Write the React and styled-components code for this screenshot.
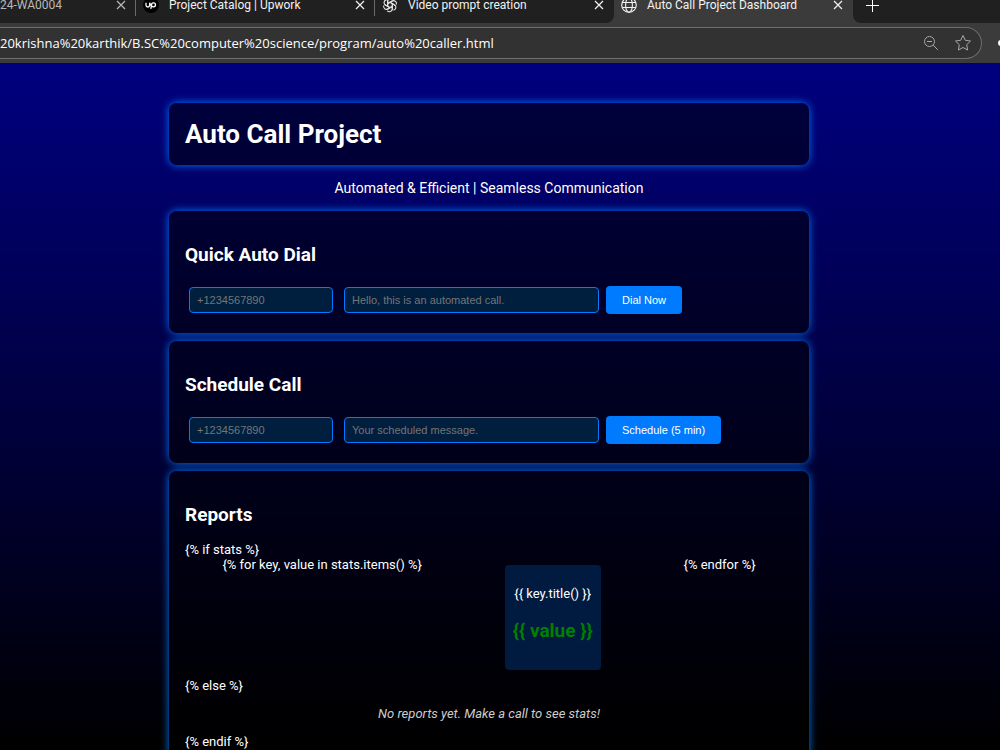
import styled, { createGlobalStyle } from "styled-components";

const GlobalStyle = createGlobalStyle`
  * {
    box-sizing: border-box;
  }
  body {
    margin: 0;
    background: #000;
  }
`;

const Browser = styled.div`
  display: flex;
  flex-direction: column;
  height: 100vh;
  font-family: "Open Sans", "Noto Sans", sans-serif;
  color: #fff;
`;

const TabStrip = styled.div`
  display: flex;
  flex: none;
  height: 23px;
  overflow: hidden;
  background: #202020;
`;

const Tab = styled.div`
  display: flex;
  align-items: center;
  flex: none;
  gap: 10px;
  width: ${(props) => (props.$cut ? "136px" : "239px")};
  height: 23px;
  padding: 0 9px 13px ${(props) => (props.$cut ? "0" : "7px")};
  font-family: Roboto, sans-serif;
  font-size: 12px;
  line-height: 10px;
  color: ${(props) => (props.$cut ? "#b8b8b8" : "#f2f2f2")};
  background: ${(props) => (props.$active ? "#3b3b3b" : "#202020")};
  border-bottom-right-radius: ${(props) => (props.$beforeActive ? "8px" : "0")};
`;

/* keeps the lighter colour behind the rounded corner next to the active tab */
const TabBacking = styled.div`
  flex: none;
  background: #3b3b3b;
`;

const Separator = styled.span`
  flex: none;
  width: 1px;
  height: 16px;
  margin-left: -1px;
  background: #6a6a6a;
`;

const TabTitle = styled.span`
  flex: 1;
  white-space: nowrap;
`;

const IconButton = styled.button`
  display: flex;
  align-items: center;
  justify-content: center;
  flex: none;
  width: 12px;
  height: 12px;
  padding: 0;
  border: none;
  background: none;
  color: inherit;

  svg {
    flex: none;
  }
`;

const StripEnd = styled.div`
  flex: 1;
  background: #3b3b3b;
`;

const NewTab = styled.div`
  display: flex;
  align-items: center;
  height: 23px;
  padding: 0 0 13px 13px;
  background: #202020;
  border-bottom-left-radius: 8px;
`;

const Toolbar = styled.div`
  display: flex;
  align-items: center;
  justify-content: space-between;
  flex: none;
  height: 40px;
  background: #3b3b3b;
  overflow: hidden;
`;

const AddressBar = styled.div`
  display: flex;
  align-items: center;
  flex: 1;
  gap: 20px;
  height: 32px;
  padding-right: 12px;
  background: #323232;
  border: 1px solid #6e6e6e;
  border-left: none;
  border-radius: 0 16px 16px 0;
  color: #a8a8a8;
`;

const Address = styled.input`
  flex: 1;
  min-width: 0;
  padding: 0;
  border: none;
  outline: none;
  background: none;
  color: #fff;
  font: 13px "Open Sans", "Noto Sans", sans-serif;
`;

const Extension = styled.svg`
  flex: none;
  margin-left: 16px;
`;

const Page = styled.div`
  flex: 1;
  min-height: 0;
  overflow-y: auto;
  scrollbar-width: none;
  padding: 40px 22px 0 0;
  background: linear-gradient(to bottom, #000080, #000);
  font-family: Roboto, sans-serif;
  font-size: 13px;
  line-height: 15px;
`;

const Container = styled.main`
  display: flex;
  flex-direction: column;
  gap: 8px;
  max-width: 640px;
  margin: 0 auto;
`;

const Card = styled.section`
  padding: 16px;
  border-radius: 8px;
  background: rgba(0, 0, 0, 0.5);
  box-shadow: 0 0 8px #007bff;
`;

const Title = styled.h1`
  margin: 0;
  font-size: 26px;
  line-height: 30px;
`;

const Tagline = styled.p`
  margin: 7px 0 6px;
  font-size: 14px;
  line-height: 17px;
  text-align: center;
`;

const Heading = styled.h2`
  margin: 17px 0 16px;
  font-size: 19px;
  line-height: 22px;
`;

const Form = styled.form`
  display: flex;
  align-items: center;
  gap: 3px;
  padding: 4px 0 3px;
`;

const Field = styled.input`
  width: ${(props) => (props.$wide ? "255px" : "144px")};
  height: 26px;
  margin: 0 4px;
  padding: 0 7px;
  border: 1px solid #007bff;
  border-radius: 4px;
  background: #001f3f;
  color: #fff;
  font: 11px "Liberation Sans", Arial, sans-serif;

  &::placeholder {
    color: #757575;
  }
`;

const Button = styled.button`
  height: 28px;
  padding: 0 16px;
  border: none;
  border-radius: 4px;
  background: #007bff;
  color: #fff;
  font: 11px "Liberation Sans", Arial, sans-serif;
  cursor: pointer;
`;

const Stats = styled.div`
  display: flex;
  justify-content: space-around;
`;

const StatBox = styled.div`
  margin: 8px;
  padding: 8px;
  border-radius: 4px;
  background: #001a40;
  text-align: center;
`;

const StatLabel = styled.p`
  margin: 13px 0 0;
`;

const StatValue = styled.p`
  margin: 19px 0 20px;
  font-size: 19px;
  font-weight: 700;
  line-height: 22px;
  color: green;
`;

const Empty = styled.p`
  margin: 13px 0;
  font-style: italic;
  color: #ccc;
  text-align: center;
`;

function CloseButton() {
  return (
    <IconButton aria-label="Close tab">
      <svg width="10" height="10" viewBox="0 0 10 10" stroke="currentColor" strokeWidth="1.2">
        <path d="M1 1l8 8M9 1l-8 8" />
      </svg>
    </IconButton>
  );
}

function UpworkIcon() {
  return (
    <svg width="16" height="16" viewBox="0 0 16 16" fill="none">
      <circle cx="8" cy="8" r="8" fill="#000" />
      <path
        d="M3 5.8v2.4a1.8 1.8 0 0 0 3.6 0V5.800c.6 1.8 1.8 4 3.9 4a2 2 0 1 0-2-2l-.7 4"
        stroke="#fff"
        strokeWidth="1.3"
      />
    </svg>
  );
}

function KnotIcon() {
  return (
    <svg width="16" height="16" viewBox="0 0 16 16" fill="none" stroke="#e4e4e4" strokeWidth="1.1">
      {[0, 60, 120, 180, 240, 300].map((angle) => (
        <path
          key={angle}
          transform={`rotate(${angle} 8 8)`}
          d="M5.7 9.4V4.1a2.8 2.8 0 0 1 5-1.7M5.7 6.6l4.4-2.5a2.8 2.8 0 0 1 1.3-.4"
        />
      ))}
    </svg>
  );
}

function GlobeIcon() {
  return (
    <svg width="16" height="16" viewBox="0 0 16 16" fill="none" stroke="#f2f2f2" strokeWidth="1.1">
      <circle cx="8" cy="8" r="7.3" />
      <ellipse cx="8" cy="8" rx="3.4" ry="7.3" />
      <path d="M1.2 5.5h13.6M1.2 10.5h13.6" />
    </svg>
  );
}

function CallForm({ title, message, action }) {
  return (
    <Card>
      <Heading>{title}</Heading>
      <Form onSubmit={(e) => e.preventDefault()}>
        <Field type="tel" aria-label="Phone number" placeholder="+1234567890" />
        <Field $wide type="text" aria-label="Message" placeholder={message} />
        <Button type="submit">{action}</Button>
      </Form>
    </Card>
  );
}

function App() {
  return (
    <Browser>
      <GlobalStyle />
      <TabStrip>
        <Tab $cut>
          <TabTitle>24-WA0004</TabTitle>
          <CloseButton />
        </Tab>
        <Separator />
        <Tab>
          <UpworkIcon />
          <TabTitle>Project Catalog | Upwork</TabTitle>
          <CloseButton />
        </Tab>
        <Separator />
        <TabBacking>
          <Tab $beforeActive>
            <KnotIcon />
            <TabTitle>Video prompt creation</TabTitle>
            <CloseButton />
          </Tab>
        </TabBacking>
        <Tab $active>
          <GlobeIcon />
          <TabTitle>Auto Call Project Dashboard</TabTitle>
          <CloseButton />
        </Tab>
        <StripEnd>
          <NewTab>
            <IconButton aria-label="New tab">
              <svg width="13" height="13" viewBox="0 0 13 13" stroke="#fff" strokeWidth="1">
                <path d="M6.5 0v13M0 6.5h13" />
              </svg>
            </IconButton>
          </NewTab>
        </StripEnd>
      </TabStrip>
      <Toolbar>
        <AddressBar>
          <Address
            aria-label="Address"
            defaultValue="20krishna%20karthik/B.SC%20computer%20science/program/auto%20caller.html"
          />
          <IconButton aria-label="Zoom">
            <svg width="16" height="16" viewBox="0 0 16 16" fill="none" stroke="currentColor">
              <circle cx="6.5" cy="6.5" r="5" />
              <path d="M4 6.5h5M10.2 10.2l4.6 4.6" />
            </svg>
          </IconButton>
          <IconButton aria-label="Add to favourites">
            <svg width="18" height="18" viewBox="0 0 18 18" fill="none" stroke="currentColor" strokeLinejoin="round">
              <path d="M9 1.5l2.3 4.8 5.2.7-3.8 3.7.9 5.3L9 13.5 4.4 16l.9-5.3L1.5 7l5.2-.7z" />
            </svg>
          </IconButton>
        </AddressBar>
        <Extension width="2" height="6" viewBox="0 0 2 6" fill="#fff">
          <circle cx="3" cy="3" r="3" />
        </Extension>
      </Toolbar>
      <Page>
        <Container>
          <Card as="header">
            <Title>Auto Call Project</Title>
          </Card>
          <Tagline>Automated &amp; Efficient | Seamless Communication</Tagline>
          <CallForm title="Quick Auto Dial" message="Hello, this is an automated call." action="Dial Now" />
          <CallForm title="Schedule Call" message="Your scheduled message." action="Schedule (5 min)" />
          <Card>
            <Heading>Reports</Heading>
            {"{% if stats %}"}
            <Stats>
              {"{% for key, value in stats.items() %}"}
              <StatBox>
                <StatLabel>{"{{ key.title() }}"}</StatLabel>
                <StatValue>{"{{ value }}"}</StatValue>
              </StatBox>
              {"{% endfor %}"}
            </Stats>
            {"{% else %}"}
            <Empty>No reports yet. Make a call to see stats!</Empty>
            {"{% endif %}"}
          </Card>
        </Container>
      </Page>
    </Browser>
  );
}

export default App;
